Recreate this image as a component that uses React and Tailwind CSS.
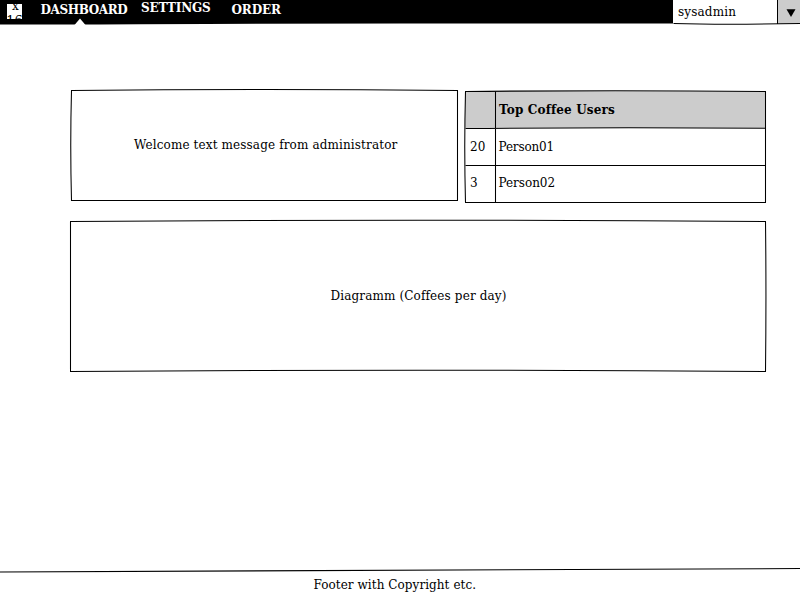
const ink = { fill: "none", stroke: "#000", strokeWidth: 1.05 };

// Hand-drawn outline laid over a panel; paths use the panel's own pixel space.
function Outline({ children }) {
  return (
    <svg className="pointer-events-none absolute inset-0 h-full w-full overflow-visible" {...ink}>
      {children}
    </svg>
  );
}

function Header() {
  return (
    <header className="relative flex h-6 items-start text-[12px] leading-4 font-bold text-white">
      <svg className="absolute top-0 left-0 h-7 w-full" viewBox="0 0 800 28">
        <path d="M0 0H800V23.4Q600 23.6 400 23.6T80 24.6L0 24.4Z" fill="#000" />
        <path d="M74.5 25L80 18.5L85.5 25Z" fill="#fff" />
      </svg>
      <div className="relative mt-1 ml-[7px] flex h-[15px] w-[15px] flex-col items-center overflow-hidden bg-white font-normal text-black">
        <span className="-mt-[3px] ml-[2px] h-[11px] text-[12px] leading-[11px]">x</span>
        <span className="mt-[3px] h-[11px] text-[13px] leading-[11px]">16</span>
      </div>
      <nav className="relative flex">
        <a className="mt-[2px] ml-[18.5px] w-[100.5px] tracking-[-0.38px]">DASHBOARD</a>
        <a className="w-[90.5px] tracking-[-0.14px]">SETTINGS</a>
        <a className="mt-[2px] tracking-[-0.15px]">ORDER</a>
      </nav>
      <div className="relative ml-auto flex h-6 w-[127px] font-normal text-black">
        <div className="w-[104px] bg-white pt-1 pl-[5px] tracking-[0.14px]">sysadmin</div>
        <div className="flex w-[23px] items-center justify-center border-l border-black bg-[#ccc]">
          <svg className="mt-[2px] ml-[3px] h-2 w-[10px]" viewBox="0 0 10 8">
            <path d="M0.5 0.2H9.5L5 8Z" />
          </svg>
        </div>
        <Outline>
          <path d="M0.5 23.5Q50 25 127 23.5" />
        </Outline>
      </div>
    </header>
  );
}

function TopUsers() {
  return (
    <section className="relative h-[112px] w-[301px]">
      <table className="w-full table-fixed border-collapse text-left">
        <colgroup>
          <col className="w-[30px]" />
          <col />
        </colgroup>
        <tbody>
          <tr className="h-[37px] bg-[#ccc] align-top">
            <th />
            <th className="pt-[11px] pl-[4px] tracking-[0.16px]">Top Coffee Users</th>
          </tr>
          <tr className="h-[37px] align-top">
            <td className="pt-[11px] pl-[5px]">20</td>
            <td className="pt-[11px] pl-[3.5px] tracking-[-0.15px]">Person01</td>
          </tr>
          <tr className="h-[37px] align-top">
            <td className="pt-[10px] pl-[5px]">3</td>
            <td className="pt-[10px] pl-[3.5px] tracking-[-0.02px]">Person02</td>
          </tr>
        </tbody>
      </table>
      <Outline>
        <path d="M0.5 0.5Q150 -1 300.5 0.5V111.5H0.5Q-1 56 0.5 0.5Z" />
        <path d="M0.5 37.5Q150 36.3 300.5 37.3M0.5 74.5H300.5M30.5 0.5V111.5" />
      </Outline>
    </section>
  );
}

export default function App() {
  return (
    <div className="flex h-[600px] w-[800px] flex-col overflow-hidden bg-white font-['DejaVu_Serif',serif] text-[12px] leading-4 text-black">
      <Header />
      <main className="flex flex-1 flex-col pt-[66px] pl-[70px]">
        <div className="flex">
          <section className="relative mr-[6px] ml-[1px] h-[111px] w-[388px] pt-[47px] pl-[63px] tracking-[0.13px]">
            Welcome text message from administrator
            <Outline>
              <path d="M0.5 0.5Q193 -1.5 386.5 0.5V110.5H0.5Q-1 55 0.5 0.5Z" />
            </Outline>
          </section>
          <div className="pt-[1px]">
            <TopUsers />
          </div>
        </div>
        <section className="relative mt-[18px] h-[151px] w-[696px] pt-[67px] pl-[1px] text-center tracking-[0.14px]">
          Diagramm (Coffees per day)
          <Outline>
            <path d="M0.5 0.5Q348 -2 695.5 0.5Q696.4 75 695.5 150.5Q348 148 0.5 150.5Z" />
          </Outline>
        </section>
      </main>
      <footer className="relative h-8 pt-[9px] pl-[313.5px] tracking-[0.06px]">
        <Outline>
          <path d="M0 4Q400 2 800 0.5" />
        </Outline>
        Footer with Copyright etc.
      </footer>
    </div>
  );
}
